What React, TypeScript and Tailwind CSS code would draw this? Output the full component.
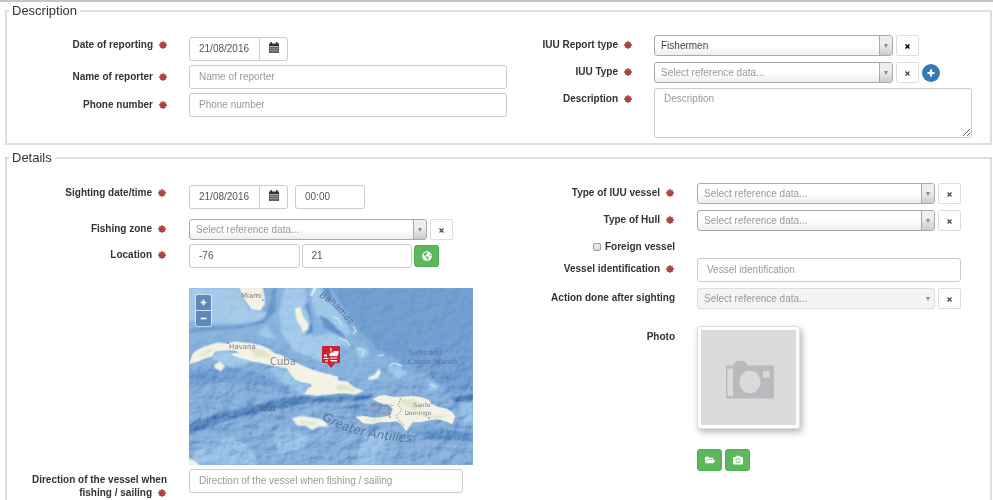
import React from "react";
import { FaCamera, FaFolderOpen, FaGlobeAmericas } from "react-icons/fa";

function Required() {
  return (
    <svg viewBox="0 0 16 16" className="ml-1.5 mr-px inline-block size-2 align-[-1px]" aria-hidden="true">
      <g stroke="#a94442" strokeWidth="3.6" strokeLinecap="butt">
        <path d="M8 0.500v15M0.500 8h15M2.700 2.700l10.600 10.600M13.300 2.700L2.700 13.300" />
      </g>
    </svg>
  );
}

function CalendarIcon() {
  return (
    <svg viewBox="0 0 20 22" className="h-[11px] w-[10px]" aria-hidden="true">
      <path fill="#333" d="M0 3h3V0h3v3h8V0h3v3h3v5H0z" />
      <path fill="#555" d="M0 9h20v13H0z" />
      <path stroke="#aaa" strokeWidth="1" d="M4 9v12M8 9v12M12 9v12M16 9v12M1 13h18M1 17h18" />
    </svg>
  );
}

type RowProps = {
  id: string;
  label: string;
  required?: boolean;
  className?: string;
  labelClass?: string;
  children: React.ReactNode;
};

function Row({ id, label, required = true, className = "", labelClass = "", children }: RowProps) {
  return (
    <div className={`flex items-start ${className}`}>
      <label htmlFor={id} className={`shrink-0 text-right font-bold text-[#333] ${labelClass}`}>
        {label}
        {required && <Required />}
      </label>
      <div className="min-w-0 flex-1">{children}</div>
    </div>
  );
}

const descLabel = "w-[126px] mr-[21px] leading-[22px]";
const detailWidth = "w-[138px] mr-[22px]";
const detailLabel = "w-[138px] mr-[22px] leading-[22px]";
const inputBase =
  "block h-6 rounded-[3px] border border-[#ccc] bg-white px-[9px] pb-0.5 text-[#555] outline-none placeholder:text-[#999] placeholder:opacity-100";

function Dropdown({ id, value, muted = true, disabled = false }: { id: string; value: string; muted?: boolean; disabled?: boolean }) {
  return (
    <div className="relative min-w-0 flex-1">
      <select
        id={id}
        disabled={disabled}
        className={`block h-[21px] w-full appearance-none rounded-[3px] border pb-[3px] pl-1.5 pr-4 opacity-100 outline-none ${
          muted ? "text-[#999]" : "text-[#444]"
        } ${disabled ? "border-[#ddd] bg-[#f4f4f4]" : "border-[#aaa] bg-linear-to-t from-[#eee] to-white to-50%"}`}
      >
        <option>{value}</option>
      </select>
      <span
        className={`pointer-events-none absolute inset-y-px right-px flex w-[13px] items-center justify-center rounded-r-[2px] ${
          disabled ? "" : "border-l border-[#aaa] bg-linear-to-t from-[#ccc] to-[#eee] to-60%"
        }`}
      >
        <span className="border-x-2 border-t-4 border-x-transparent border-t-[#888]" />
      </span>
    </div>
  );
}

function ClearButton({ strong = false }: { strong?: boolean }) {
  return (
    <button
      type="button"
      aria-label="Clear"
      className={`ml-[3px] flex h-[21px] w-[23px] shrink-0 items-center justify-center rounded-[2px] border border-[#ddd] bg-white ${
        strong ? "text-black" : "text-[#444]"
      }`}
    >
      <svg viewBox="0 0 10 10" className="mt-px size-[5px]" aria-hidden="true">
        <path d="M1 1l8 8M9 1L1 9" stroke="currentColor" strokeWidth={strong ? 3 : 2.3} />
      </svg>
    </button>
  );
}

function DateField({ id }: { id: string }) {
  return (
    <div className="flex">
      <input id={id} defaultValue="21/08/2016" className={`${inputBase} w-[71px] rounded-r-none`} />
      <button
        type="button"
        aria-label="Open calendar"
        className="-ml-px flex h-6 w-[29px] items-center justify-center rounded-r-[3px] border border-[#ccc] bg-white pb-[3px]"
      >
        <CalendarIcon />
      </button>
    </div>
  );
}

function GreenButton({ label, id, children }: { label: string; id?: string; children: React.ReactNode }) {
  return (
    <button
      type="button"
      id={id}
      aria-label={label}
      className="flex h-[22px] w-[25px] items-center justify-center rounded-[3px] border border-[#4cae4c] bg-[#5cb85c] text-[10px] text-white"
    >
      {children}
    </button>
  );
}

const cuba =
  "M1 75L4 66L9 62L16 59L29 55L38 56L46 54L55 55L63 56L72 58L79 61L86 66L93 68L99 72L107 75L115 79L123 82L129 84L136 86L141 87L148 89L149 93L158 94L164 99L173 103L166 106L158 105L148 105L141 106L129 107L116 106L119 101L124 98L121 95L113 94L106 91L102 86L98 80L88 78L79 76L70 74L63 73L56 71L46 68L43 66L51 65L46 62L39 62L26 63L23 68L16 70L9 73Z";
const hispaniola =
  "M184 111L190 108L196 107L204 109L213 109L222 108L231 109L240 112L242 116L249 119L258 121L264 125L266 129L263 136L256 133L248 131L241 132L231 134L224 134L220 139L217 143L213 137L208 133L200 134L191 134L183 136L174 135L167 129L174 128L186 130L194 129L201 128L204 121L199 117L191 115Z";
const islands =
  "M51 0L54 8L58 14L63 21L71 22L75 16L75 9L73 0ZM106 21L111 19L114 29L119 36L118 41L114 44L112 38L108 33ZM127 0L124 6L122 7L125 0ZM104 131L110 129L116 129L129 131L136 134L138 138L130 138L123 141L116 137L109 137ZM26 77L31 74L35 78L32 82L27 80ZM180 90L186 87L190 82L191 85L188 90L181 91ZM0 177L0 171L6 174L10 177Z";

function SightingMap() {
  return (
    <div className="relative">
      <svg viewBox="0 0 284 177" className="block w-full" role="img" aria-label="Sighting location">
        <defs>
          <filter id="relief" x="0" y="0" width="100%" height="100%" colorInterpolationFilters="sRGB">
            <feTurbulence type="fractalNoise" baseFrequency="0.08 0.1" numOctaves="3" seed="21" />
            <feDiffuseLighting surfaceScale="3" diffuseConstant="0.74" lightingColor="#fff">
              <feDistantLight azimuth="225" elevation="45" />
            </feDiffuseLighting>
          </filter>
          <filter id="soften" x="-10%" y="-10%" width="120%" height="120%">
            <feGaussianBlur stdDeviation="1.2" />
          </filter>
          <linearGradient id="south" x1="0" y1="0" x2="0" y2="1">
            <stop offset="0" stopColor="#bbb" stopOpacity="0" />
            <stop offset="0.5" stopColor="#bbb" stopOpacity="1" />
          </linearGradient>
          <mask id="rough">
            <rect width="284" height="177" fill="#333" />
            <rect y="50" width="284" height="127" fill="url(#south)" />
          </mask>
          <path id="bahamasPath" d="M130 9Q148 17 166 45" />
          <path id="antillesPath" d="M133 131Q165 153 240 155" />
        </defs>
        <rect width="284" height="177" fill="#84add9" />
        <g filter="url(#soften)">
          <path fill="#87b2dc" d="M0 36L60 34L84 18L90 0L150 0L170 50L200 76L190 108L150 88L90 62L60 50L0 60Z" />
          <path fill="#a5c9e8" d="M0 0L50 0L60 22L78 24L74 32L50 36L0 34Z" />
          <path fill="#a3c9ea" d="M96 0L116 0L118 14L114 20L120 26L120 42L124 50L142 44L156 56L146 62L140 76L118 68L104 62L92 44L90 24Z" />
          <path fill="#a0c8ea" d="M122 0L134 0L140 12L152 28L162 44L156 50L146 40L132 34L124 20Z" />
          <path fill="#9ac4e9" d="M80 79L98 81L108 92L122 96L116 108L100 98L88 90Z" />
          <path fill="#a0c8ea" d="M22 70L28 63L48 64L62 74L44 80L30 74ZM68 46L77 37L87 50L78 50Z" />
          <path fill="#a0c8ea" d="M143 26L152 34L160 60L146 54ZM166 58L178 60L180 66L170 72ZM196 78L210 75L218 86L210 92ZM238 92L246 94L250 100L240 104Z" />
          <path fill="#96bfe6" d="M84 148L100 142L122 150L112 162L90 166ZM6 164L40 148L60 158L68 172L66 177L0 177ZM176 144L204 144L190 177L166 177ZM272 116L284 114L284 136L274 134Z" />
          <path fill="#6b98cd" d="M0 82L36 80L66 84L96 98L104 106L70 96L30 94L0 100ZM158 118L174 114L184 122L164 128Z" opacity="0.8" />
          <path fill="#5484bd" d="M0 136L28 126L70 116L100 109L130 109L170 107L184 106L180 112L120 115L74 124L40 132L0 146Z" />
          <path fill="#4477ae" d="M262 110L284 106L284 112L266 114Z" />
          <path fill="#6191c7" d="M224 144L252 140L284 146L284 153L246 152Z" />
          <path fill="#6798cd" d="M80 18L84 0L87 0L86 24L74 36L50 40L0 44L0 41L60 37L76 30Z" />
          <path fill="#719ed0" d="M142 0L284 0L284 106L262 106L240 88L212 74L190 62L168 40Z" />
          <path fill="#6292c9" d="M119 12L122 26L124 44L116 48L122 34L116 18ZM130 27L140 32L158 50L154 50L136 40ZM134 0L140 0L144 10L138 14Z" />
        </g>
        <path fill="none" stroke="#a9cff0" strokeWidth="3" strokeLinejoin="round" d={islands} />
        <path fill="none" stroke="#b1d4ef" strokeWidth="2" d={cuba} />
        <rect width="284" height="177" filter="url(#relief)" mask="url(#rough)" className="mix-blend-soft-light" />
        <g fill="#f3f2e4" stroke="#dfe8df" strokeWidth="0.6">
          <path d={cuba} />
          <path d={hispaniola} />
          <path d={islands} />
        </g>
        <g fill="#dbe3c5" filter="url(#soften)" opacity="0.9">
          <path d="M148 96L160 98L168 103L148 102ZM208 112L224 112L236 120L224 122ZM110 133L128 134L126 137L112 136ZM8 69L18 62L26 60L18 66ZM60 60L74 62L84 70L66 68ZM174 131L194 131L186 134ZM226 127L258 128L250 131Z" />
        </g>
        <path d="M212 110L209 117L213 122L207 128L211 134L216 138" fill="none" stroke="#a8a89c" strokeDasharray="2 1" />
        <path
          d="M143 28L149 31L153 38M164 38L167 43L164 46M150 50L158 53L161 58M168 60L175 63L173 68M189 68L195 67M200 78L205 75L213 78M242 96L246 99"
          fill="none"
          stroke="#d3e4ea"
          strokeWidth="1.2"
        />
        <g fontFamily="'DejaVu Sans', sans-serif" fill="#73777e">
          <text x="52" y="10" fontSize="7">Miami</text>
          <text x="40" y="61" fontSize="7">Havana</text>
          <text x="81" y="77" fontSize="10" fill="#85888e">Cuba</text>
          <g fontSize="6" textAnchor="middle" fill="#7e8188">
            <text x="193" y="119">Port-au-</text>
            <text x="193" y="127">Prince</text>
            <text x="233" y="119">Santo</text>
            <text x="229" y="127">Domingo</text>
          </g>
          <g fontStyle="italic" fill="#5d7397">
            <text x="219" y="67" fontSize="7">Turks and</text>
            <text x="219" y="76" fontSize="7">Caicos Islands</text>
            <text x="70" y="123" fontSize="7" fill="#44608a">8201</text>
            <text x="281" y="103" fontSize="7">P</text>
            <text fontSize="9"><textPath href="#bahamasPath">Bahamas</textPath></text>
            <text fontSize="12"><textPath href="#antillesPath">Greater Antilles</textPath></text>
          </g>
        </g>
        <circle cx="74" cy="12" r="0.8" fill="#666" />
        <circle cx="39" cy="55" r="0.8" fill="#666" />
        <circle cx="201" cy="129" r="0.8" fill="#666" />
        <circle cx="240" cy="130" r="0.8" fill="#666" />
        <path d="M134 58H150Q151 58 151 59V74Q151 75 150 75H146L142 80L138 75H134Q133 75 133 74V59Q133 58 134 58Z" fill="#cc2231" />
        <path d="M141 60h1.500v4.500h2v-1.500h5v2l-1 3h-8v-3h1.500zM135 66.500h3v2h-3zM134.500 70h5v1h-5zM141 69.500h7v1h-7zM136 72.500h3v1h-3zM141 72h7v1.500h-6z" fill="#fff" />
      </svg>
      <div className="absolute left-1.5 top-1.5 flex flex-col gap-px rounded-[3px] bg-white/50 p-px text-white">
        <button type="button" aria-label="Zoom in" className="flex size-[15px] items-center justify-center rounded-t-[2px] bg-[#5c88bb]">
          <svg viewBox="0 0 10 10" className="size-[7px]"><path d="M5 1v8M1 5h8" stroke="white" strokeWidth="2.400" /></svg>
        </button>
        <button type="button" aria-label="Zoom out" className="flex size-[15px] items-center justify-center rounded-b-[2px] bg-[#5c88bb]">
          <svg viewBox="0 0 10 10" className="size-[7px]"><path d="M1 5h8" stroke="white" strokeWidth="2.400" /></svg>
        </button>
      </div>
    </div>
  );
}

const legendClass = "ml-0.5 px-[3px] text-[13px] leading-[18px] text-[#333]";

export default function App() {
  return (
    <form className="flex min-h-screen flex-col border-t-2 border-[#c6c6c6] bg-white pl-[5px] pr-px font-['Liberation_Sans',Arial,sans-serif] text-[10px] leading-5">
      <fieldset className="min-w-0 border-2 border-[#dedede] pb-[5px]">
        <legend className={legendClass}>Description</legend>
        <div className="grid grid-cols-2 pl-[35px] pr-[18px] pt-3.5">
          <div className="flex flex-col gap-1">
            <Row id="report-date" label="Date of reporting" labelClass={descLabel}>
              <div className="pt-[3px]"><DateField id="report-date" /></div>
            </Row>
            <Row id="reporter" label="Name of reporter" labelClass={`${descLabel} pt-px`}>
              <input id="reporter" placeholder="Name of reporter" className={`${inputBase} w-full`} />
            </Row>
            <Row id="phone" label="Phone number" labelClass={`${descLabel} pt-px`}>
              <input id="phone" placeholder="Phone number" className={`${inputBase} w-full`} />
            </Row>
          </div>
          <div className="flex flex-col gap-[5px]">
            <Row id="report-type" label="IUU Report type" labelClass={descLabel}>
              <div className="flex pr-[53px] pt-px">
                <Dropdown id="report-type" value="Fishermen" muted={false} />
                <ClearButton strong />
              </div>
            </Row>
            <Row id="iuu-type" label="IUU Type" labelClass={descLabel}>
              <div className="flex pr-8 pt-px">
                <Dropdown id="iuu-type" value="Select reference data..." />
                <ClearButton />
                <button type="button" aria-label="Add type" className="ml-[3px] mt-0.5 flex size-[18px] shrink-0 items-center justify-center rounded-full bg-[#337ab7]">
                  <svg viewBox="0 0 10 10" className="size-2"><path d="M5 0.500v9M0.500 5h9" stroke="white" strokeWidth="2.800" /></svg>
                </button>
              </div>
            </Row>
            <Row id="description" label="Description" labelClass={descLabel}>
              <textarea
                id="description"
                placeholder="Description"
                className="block h-[50px] w-full rounded-[3px] border border-[#ccc] bg-white px-[9px] text-[#555] outline-none placeholder:text-[#999]"
              />
            </Row>
          </div>
        </div>
      </fieldset>

      <fieldset className="mt-1 min-w-0 flex-1 border-2 border-b-0 border-[#dedede]">
        <legend className={legendClass}>Details</legend>
        <div className="grid grid-cols-2 gap-16 pl-[22px] pr-[9px] pt-[15px]">
          <div className="flex flex-col gap-1">
            <Row id="sighting-date" label="Sighting date/time" className="mb-[5px]" labelClass={detailLabel}>
              <div className="flex gap-[7px] pt-[3px]">
                <DateField id="sighting-date" />
                <input aria-label="Sighting time" defaultValue="00:00" className={`${inputBase} w-[70px]`} />
              </div>
            </Row>
            <Row id="zone" label="Fishing zone" labelClass={detailLabel}>
              <div className="flex pr-5 pt-px">
                <Dropdown id="zone" value="Select reference data..." />
                <ClearButton />
              </div>
            </Row>
            <Row id="longitude" label="Location" labelClass={detailLabel}>
              <div className="flex gap-[2px] pr-[34px]">
                <input id="longitude" defaultValue="-76" className={`${inputBase} min-w-0 flex-1`} />
                <input aria-label="Latitude" defaultValue="21" className={`${inputBase} min-w-0 flex-1`} />
                <div className="pt-px"><GreenButton label="Pick on map"><FaGlobeAmericas /></GreenButton></div>
              </div>
            </Row>
            <div className="mt-4 pl-40"><SightingMap /></div>
            <Row id="direction" label="Direction of the vessel when fishing / sailing" labelClass={`${detailWidth} pt-1 leading-[13px]`}>
              <div className="pr-[10px]">
                <input id="direction" placeholder="Direction of the vessel when fishing / sailing" className={`${inputBase} w-full`} />
              </div>
            </Row>
          </div>
          <div className="flex flex-col gap-[5px] pr-5">
            <Row id="vessel-type" label="Type of IUU vessel" labelClass={detailLabel}>
              <div className="flex pt-px">
                <Dropdown id="vessel-type" value="Select reference data..." />
                <ClearButton />
              </div>
            </Row>
            <Row id="hull-type" label="Type of Hull" labelClass={detailLabel}>
              <div className="flex pt-px">
                <Dropdown id="hull-type" value="Select reference data..." />
                <ClearButton />
              </div>
            </Row>
            <div>
              <label className="flex w-[138px] items-center justify-end gap-1 pt-px font-bold text-[#333]">
                <input type="checkbox" className="size-2 appearance-none rounded-[2px] border border-[#999] bg-linear-to-b from-[#eee] to-[#ddd]" />
                Foreign vessel
              </label>
              <Row id="vessel-id" label="Vessel identification" className="pt-px" labelClass={detailLabel}>
                <input id="vessel-id" placeholder="Vessel identification" className={`${inputBase} w-full`} />
              </Row>
            </div>
            <Row id="action" label="Action done after sighting" required={false} labelClass={detailLabel}>
              <div className="flex pt-px">
                <Dropdown id="action" value="Select reference data..." disabled />
                <ClearButton />
              </div>
            </Row>
            <Row id="photo-open" label="Photo" required={false} className="mt-3" labelClass={detailLabel}>
              <div className="size-[103px] rounded-[3px] border border-[#ddd] bg-white p-[3px] shadow-[2px_3px_7px_rgba(0,0,0,0.3)]">
                <svg viewBox="0 0 95 95" className="block size-full bg-[#d9dbda]" role="img" aria-label="No photo">
                  <path fill="#b8babe" d="M25 37Q25 35.500 26.500 35.500H31.500L34 32.500Q35 31 37 31H42Q44 31 45 32.500L47 35.500H71.500Q73 35.500 73 37V67Q73 68.500 71.500 68.500H26.500Q25 68.500 25 67Z" />
                  <path fill="#d9dbda" d="M26.500 38.500H32V66H26.500ZM62 41H68.500V47.500H62Z" />
                  <ellipse cx="49" cy="52" rx="10.500" ry="11.200" fill="#d9dbda" />
                </svg>
              </div>
              <div className="mt-5 flex gap-[3px]">
                <GreenButton id="photo-open" label="Open photo"><FaFolderOpen /></GreenButton>
                <GreenButton label="Take photo"><FaCamera /></GreenButton>
              </div>
            </Row>
          </div>
        </div>
      </fieldset>
    </form>
  );
}
